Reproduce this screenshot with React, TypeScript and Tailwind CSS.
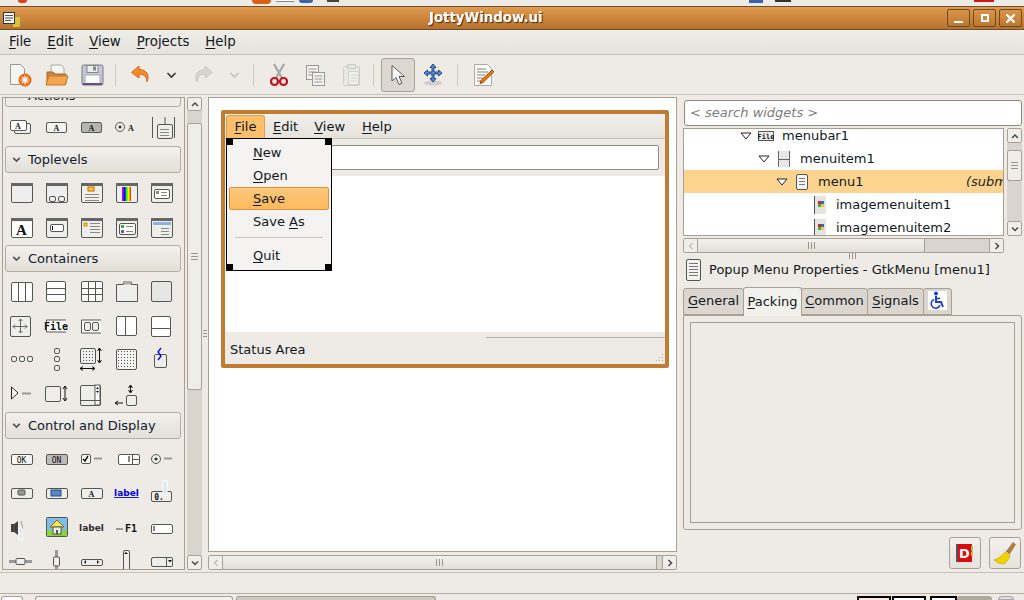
import type { ReactNode } from "react";

const ink = "#555753";

// text with an underlined mnemonic letter
function M({ k, rest, pre }: { k: string; rest: string; pre?: string }) {
  return (
    <span>
      {pre}
      <span className="underline underline-offset-2 decoration-1">{k}</span>
      {rest}
    </span>
  );
}

function Box(p: { x: number; y: number; w: number; h: number; fill?: string; r?: number; s?: string }) {
  return <rect x={p.x + 0.5} y={p.y + 0.5} width={p.w} height={p.h} rx={p.r ?? 1.5} fill={p.fill ?? "#eeeeec"} stroke={p.s ?? ink} />;
}

function Lines({ x, y, w, n, gap = 3, c = "#888a85" }: { x: number; y: number; w: number; n: number; gap?: number; c?: string }) {
  return (
    <>
      {Array.from({ length: n }).map((_, i) => (
        <line key={i} x1={x} x2={x + w} y1={y + i * gap + 0.5} y2={y + i * gap + 0.5} stroke={c} />
      ))}
    </>
  );
}

function Letter({ x, y, t = "A", size = 10, fill = "#111", family = "Liberation Serif", bold = true, underline }: { x: number; y: number; t?: string; size?: number; fill?: string; family?: string; bold?: boolean; underline?: boolean }) {
  return (
    <text x={x} y={y} textAnchor="middle" fontSize={size} fontWeight={bold ? 700 : 400} fill={fill} fontFamily={family} textDecoration={underline ? "underline" : undefined}>
      {t}
    </text>
  );
}

function Win({ children }: { children?: ReactNode }) {
  return (
    <>
      <Box x={7} y={7} w={21} h={19} />
      <rect x={7} y={7} width={22} height={3} fill="#666" />
      {children}
    </>
  );
}

const dots = (x: number, y: number, nx: number, ny: number) => {
  const out: ReactNode[] = [];
  for (let i = 0; i < nx; i++) for (let j = 0; j < ny; j++) out.push(<rect key={i + "-" + j} x={x + i * 3} y={y + j * 3} width={1} height={1} fill="#555" />);
  return out;
};

const arrowH = (x1: number, x2: number, y: number) => (
  <path d={`M${x1} ${y}H${x2}M${x1 + 3} ${y - 2}L${x1} ${y}L${x1 + 3} ${y + 2}M${x2 - 3} ${y - 2}L${x2} ${y}L${x2 - 3} ${y + 2}`} fill="none" stroke="#111" />
);
const arrowV = (x: number, y1: number, y2: number) => (
  <path d={`M${x} ${y1}V${y2}M${x - 2} ${y1 + 3}L${x} ${y1}L${x + 2} ${y1 + 3}M${x - 2} ${y2 - 3}L${x} ${y2}L${x + 2} ${y2 - 3}`} fill="none" stroke="#111" />
);

const actions: ReactNode[] = [
  <><Box x={10} y={13} w={16} h={10} /><Box x={6} y={10} w={16} h={10} fill="#fff" /><Letter x={14} y={19} size={8} /></>,
  <><Box x={7} y={12} w={20} h={10} fill="#f4f4f2" /><Letter x={17.5} y={21} size={8} /></>,
  <><Box x={7} y={12} w={20} h={10} fill="#b5b5b3" /><Letter x={17.5} y={21} size={8} /></>,
  <><circle cx={11} cy={17} r={4.5} fill="#eee" stroke={ink} /><circle cx={11} cy={17} r={1.5} fill="#333" /><Letter x={22} y={21} size={8} /></>,
  <><path d="M8.5 7V28M30.5 7V28" stroke={ink} /><Box x={13} y={14} w={15} h={14} /><Lines x={16} y={19} w={9} n={3} /><path d="M21 7V14" stroke={ink} /></>,
];

const toplevels: ReactNode[] = [
  <Win />,
  <Win><Box x={10} y={20} w={6} h={5} /><Box x={19} y={20} w={6} h={5} /></Win>,
  <Win><rect x={14} y={11} width={6} height={4} fill="#fc3" stroke="#c60" /><Lines x={11} y={18} w={14} n={3} /></Win>,
  <Win><rect x={13} y={11} width={9} height={14} fill="url(#rainbow)" /></Win>,
  <Win><Box x={10} y={13} w={15} h={9} fill="#fff" /><rect x={12} y={15} width={3} height={3} fill="#888" /><Lines x={17} y={16} w={6} n={2} /></Win>,
  <Win><rect x={8} y={11} width={20} height={15} fill="#fff" /><Letter x={17.5} y={24} size={15} /></Win>,
  <Win><Box x={11} y={13} w={13} h={7} fill="#fff" /><path d="M13.5 15v4" stroke="#111" /></Win>,
  <Win><rect x={10} y={12} width={3} height={3} fill="#fc3" stroke="#b90" /><Lines x={16} y={12} w={10} n={4} /></Win>,
  <Win><Box x={10} y={12} w={16} h={11} fill="#fff" /><rect x={12} y={14} width={3} height={3} fill="#4a4" /><rect x={12} y={19} width={3} height={3} fill="#75a" /><Lines x={17} y={15} w={7} n={2} gap={5} /></Win>,
  <Win><rect x={9} y={11} width={18} height={3} fill="#8fb0dc" /><Lines x={17} y={17} w={8} n={3} /></Win>,
];

const containers: ReactNode[] = [
  <><Box x={7} y={8} w={21} h={19} fill="#fff" /><path d="M14.5 8V27M21.5 8V27" stroke={ink} /></>,
  <><Box x={7} y={7} w={19} h={20} fill="#fff" /><path d="M7 14.5H26M7 20.5H26" stroke={ink} /></>,
  <><Box x={7} y={7} w={21} h={20} fill="#fff" /><path d="M14.5 7V27M21.5 7V27M7 14.5H28M7 20.5H28" stroke={ink} /></>,
  <><path d="M7.5 10.500H14.500V8H22.500V10.500H28.500V27.500H7.500Z" fill="#eeeeec" stroke={ink} /><rect x={14.5} y={7.5} width={8} height={3} rx={1} fill="#aaa" /></>,
  <><Box x={7} y={7} w={20} h={20} fill="#e6e6e4" /></>,
  <><Box x={6} y={7} w={20} h={20} /><path d="M16.5 10V24M9 17.5H23" stroke="#666" /><path d="M14.5 12l2-2 2 2M14.5 22l2 2 2-2M11 15.5l-2 2 2 2M21 15.5l2 2-2 2" fill="none" stroke="#666" /></>,
  <><path d="M27 11H7.5V23H27" fill="#fff" stroke={ink} /><Letter x={17} y={21} t="File" size={10} family="DejaVu Sans Mono" /></>,
  <><path d="M27 11H7.5V24H27" fill="#fff" stroke={ink} /><Box x={10} y={13} w={6} h={8} /><Box x={18} y={13} w={6} h={8} /></>,
  <><Box x={7} y={7} w={20} h={19} fill="#fff" /><path d="M16.5 7V26" stroke={ink} /></>,
  <><Box x={7} y={7} w={19} h={20} fill="#fff" /><path d="M7 19.5H26" stroke={ink} /></>,
  <><Box x={7} y={13} w={5} h={5} /><Box x={15} y={13} w={5} h={5} /><Box x={23} y={13} w={5} h={5} /></>,
  <><Box x={15} y={5} w={5} h={5} /><Box x={15} y={13} w={5} h={5} /><Box x={15} y={22} w={5} h={5} /></>,
  <><Box x={6} y={5} w={15} h={15} />{dots(9, 8, 4, 4)}{arrowV(25.5, 5, 20)}{arrowH(6, 21, 25.5)}</>,
  <><Box x={7} y={6} w={20} h={20} fill="#f4f4f2" />{dots(9, 8, 6, 6)}</>,
  <><Box x={10} y={11} w={12} h={13} /><path d="M17 5l-3 4 3 4-3 4" fill="none" stroke="#00f" strokeWidth={1.3} /></>,
  <><path d="M7.5 9V21L14 15Z" fill="#fff" stroke="#222" /><path d="M18 15.5H27" stroke="#999" strokeWidth={2} /></>,
  <><Box x={6} y={8} w={15} h={15} />{arrowV(26, 8, 23)}</>,
  <><Box x={6} y={7} w={20} h={20} /><rect x={21} y={7} width={5} height={20} fill="#fff" stroke={ink} /><path d="M22 11h3l-1.5-2zM22 13h3l-1.5 2z" fill="#111" /><path d="M6 22.5H26" stroke={ink} /></>,
  <><path d="M14 25H6M9 23l-3 2 3 2" fill="none" stroke="#111" /><Box x={17} y={17} w={10} h={10} />{arrowV(21.5, 7, 15)}</>,
];

const controls: ReactNode[] = [
  <><Box x={7} y={12} w={21} h={10} fill="#f6f6f4" /><Letter x={17.5} y={21} t="OK" size={8} family="DejaVu Sans Mono" bold={false} /></>,
  <><Box x={7} y={12} w={21} h={10} fill="#bbb" /><Letter x={17.5} y={21} t="ON" size={8} family="DejaVu Sans Mono" bold={false} /></>,
  <><Box x={7} y={12} w={9} h={9} fill="#fff" /><path d="M9 17l2 2 3-5" fill="none" stroke="#111" strokeWidth={1.5} /><path d="M20 16.5h8" stroke="#999" strokeWidth={2} /></>,
  <><Box x={9} y={12} w={21} h={10} fill="#fff" /><path d="M20 14v6" stroke="#111" /><path d="M23.5 12v11M23.5 17.5H30" stroke={ink} /></>,
  <><circle cx={12} cy={17} r={4.5} fill="#eee" stroke={ink} /><circle cx={12} cy={17} r={1.5} fill="#333" /><path d="M20 16.5h8" stroke="#999" strokeWidth={2} /></>,
  <><Box x={7} y={12} w={21} h={10} /><rect x={14} y={14} width={7} height={5} rx={1} fill="#999" stroke={ink} /></>,
  <><Box x={7} y={12} w={21} h={10} /><rect x={12} y={14} width={10} height={6} fill="#5b87c5" stroke="#204a87" /></>,
  <><Box x={7} y={12} w={21} h={10} /><Letter x={17.5} y={21} size={8} /></>,
  <Letter x={17.5} y={20} t="label" size={9} fill="#0000ee" family="DejaVu Sans" underline />,
  <><Box x={7} y={15} w={20} h={10} /><Letter x={15} y={24} t="0." size={8} family="DejaVu Sans Mono" /><rect x={19} y={5} width={4} height={14} fill="#dce6f4" stroke="#fff" /></>,
  <><path d="M7 13h3l4-3v14l-4-3H7z" fill="#444" /><path d="M17 10q3 6 0 12" fill="none" stroke="#999" /><rect x={15} y={17} width={3} height={12} fill="#dce6f4" stroke="#fff" /></>,
  <><rect x={7.5} y={6.5} width={21} height={19} rx={1} fill="#7ebdf0" stroke={ink} /><rect x={8} y={19} width={20} height={6} fill="#8ad33d" /><path d="M11 16l7-7 7 7z" fill="#fce94f" stroke="#8a6a00" /><rect x={14} y={16} width={8} height={7} fill="#eee" stroke="#555" /><rect x={17} y={19} width={2} height={4} fill="#555" /></>,
  <Letter x={17.5} y={20} t="label" size={9} fill="#2e2e2e" family="DejaVu Sans" />,
  <><path d="M7 18h7" stroke="#999" strokeWidth={2} /><Letter x={22} y={21} t="F1" size={10} family="DejaVu Sans Mono" /></>,
  <><Box x={7} y={13} w={21} h={9} fill="#fff" /><path d="M10 15v5" stroke="#111" /></>,
  <><path d="M5 16.5h23" stroke="#999" strokeWidth={3} /><rect x={12} y={13.5} width={9} height={6} rx={1} fill="#eee" stroke={ink} /></>,
  <><path d="M17.5 5v23" stroke="#999" strokeWidth={3} /><rect x={14.5} y={12} width={6} height={9} rx={1} fill="#eee" stroke={ink} /></>,
  <><Box x={7} y={14} w={21} h={6} /><path d="M12 15v4l-2-2zM23 15v4l2-2z" fill="#111" /></>,
  <><Box x={14} y={5} w={6} h={24} /><path d="M15 9h4l-2-2zM15 25h4l-2 2z" fill="#111" /></>,
  <><Box x={7} y={12} w={21} h={9} /><path d="M22.5 12v9" stroke={ink} /><path d="M24 15h4l-2 2.5z" fill="#111" /></>,
];

function Tool({ children }: { children: ReactNode }) {
  return (
    <svg width={35} height={34} viewBox="0 0 35 34" className="block">
      {children}
    </svg>
  );
}

function Grid({ items, rowH, pad }: { items: ReactNode[]; rowH: string; pad: string }) {
  return (
    <div className={`grid grid-cols-[repeat(5,35px)] pl-[1px] ${rowH} ${pad}`}>
      {items.map((it, i) => (
        <div key={i} className="h-[34px]">
          <Tool>{it}</Tool>
        </div>
      ))}
    </div>
  );
}

function Chevron({ dir, c = "#2e3436", size = 10 }: { dir: "up" | "down" | "left" | "right"; c?: string; size?: number }) {
  const d = { up: "M2 7l3-3 3 3", down: "M2 3.5l3 3 3-3", left: "M6.5 2l-3 3 3 3", right: "M3.5 2l3 3-3 3" }[dir];
  return (
    <svg width={size} height={size} viewBox="0 0 10 10" className="block">
      <path d={d} fill="none" stroke={c} strokeWidth={1.5} />
    </svg>
  );
}

function Expander({ label }: { label: string }) {
  return (
    <div className="w-[176px] h-[27px] ml-[2px] flex items-center rounded-[3px] border border-[#b3aca0] bg-gradient-to-b from-[#f3f1ee] to-[#e3dfd9] pl-[5px] gap-[6px] shrink-0">
      <Chevron dir="down" size={11} c="#555" />
      <span className="text-[13px] leading-none text-[#10202e]">{label}</span>
    </div>
  );
}

function GripV() {
  return (
    <div className="flex flex-col gap-[2px] w-[7px]">
      <div className="h-px bg-[#9a948a]" />
      <div className="h-px bg-[#9a948a]" />
      <div className="h-px bg-[#9a948a]" />
    </div>
  );
}

function GripH() {
  return (
    <div className="flex gap-[2px] h-[7px]">
      <div className="w-px bg-[#9a948a]" />
      <div className="w-px bg-[#9a948a]" />
      <div className="w-px bg-[#9a948a]" />
    </div>
  );
}

function ArrowBtn({ dir, dim, className }: { dir: "up" | "down" | "left" | "right"; dim?: boolean; className?: string }) {
  return (
    <div className={`flex items-center justify-center rounded-[2px] border border-[#a8a196] bg-[#f0eeea] shrink-0 ${className ?? ""}`}>
      <Chevron dir={dir} c={dim ? "#bbb7b0" : "#4a4a48"} />
    </div>
  );
}

function HScroll({ thumb, dim }: { thumb: string; dim?: boolean }) {
  return (
    <div className="h-[15px] flex rounded-[2px] border border-[#a8a196] bg-[#d9d5ce] overflow-hidden">
      <div className="w-[14px] flex items-center justify-center bg-[#f0eeea] border-r border-[#a8a196]">
        <Chevron dir="left" c={dim ? "#c4c0b9" : "#4a4a48"} />
      </div>
      <div className={`${thumb} flex items-center justify-center bg-gradient-to-b from-[#f3f1ee] to-[#e3dfd9] border-r border-[#a8a196]`}>
        <GripH />
      </div>
      <div className="flex-1" />
      <div className="w-[14px] flex items-center justify-center bg-[#f0eeea] border-l border-[#a8a196]">
        <Chevron dir="right" c="#4a4a48" />
      </div>
    </div>
  );
}

function MenuIcon({ w = 15, h = 22 }: { w?: number; h?: number }) {
  const rows: number[] = [];
  for (let y = 4.5; y < h - 3; y += 3) rows.push(y);
  return (
    <svg width={w} height={h} viewBox={`0 0 ${w} ${h}`} className="block shrink-0">
      <rect x={0.5} y={0.5} width={w - 1} height={h - 1} rx={1.5} fill="#f4f4f2" stroke="#555" />
      {rows.map((y) => (
        <path key={y} d={`M3 ${y}h${w - 6}`} stroke="#777" />
      ))}
    </svg>
  );
}

function TreeRow({ indent, arrow, icon, label, hint, selected }: { indent: number; arrow?: boolean; icon: ReactNode; label: string; hint?: string; selected?: boolean }) {
  return (
    <div className={`h-[23px] flex items-center shrink-0 whitespace-nowrap ${selected ? "bg-[#fdd48f]" : ""}`} style={{ paddingLeft: indent }}>
      {arrow ? (
        <svg width={12} height={8} viewBox="0 0 12 8" className="shrink-0 mr-[5px]">
          <path d="M1 1h10L6 7z" fill="#fff" stroke="#222" />
        </svg>
      ) : (
        <span className="w-[17px] shrink-0" />
      )}
      <span className="w-[18px] mr-[7px] flex justify-center shrink-0">{icon}</span>
      <span className="text-[13px] text-[#0f1a24]">{label}</span>
      {hint && <span className="ml-auto text-[13px] italic w-[37px] overflow-hidden shrink-0 text-[#222]">{hint}</span>}
    </div>
  );
}

function ImgItem() {
  return (
    <svg width={12} height={18} viewBox="0 0 12 18" className="block">
      <rect width={12} height={18} fill="#e4e4e2" />
      <path d="M0.5 0V18" stroke="#555" />
      <rect x={4} y={5} width={3} height={3} fill="#d22" />
      <rect x={7} y={5} width={3} height={3} fill="#36c" />
      <rect x={4} y={8} width={3} height={3} fill="#4a4" />
      <rect x={7} y={8} width={3} height={3} fill="#ec3" />
    </svg>
  );
}

function Tab({ active, w, children }: { active?: boolean; w: string; children: ReactNode }) {
  return (
    <div className={`${w} flex items-center justify-center pb-[2px] text-[13px] leading-none border border-[#a8a196] rounded-t-[3px] -mr-px ${active ? "h-[29px] bg-[#f3f1ee] border-b-0 relative z-10 -mb-px" : "h-[27px] bg-[#dbd6cf] "}`}>
      {children}
    </div>
  );
}

function Sep() {
  return <div className="w-px h-[22px] bg-[#cfcac2]" />;
}

function Tb({ w, children }: { w: number; children: ReactNode }) {
  return (
    <svg width={w} height={24} viewBox={`0 0 ${w} 24`} className="block shrink-0">
      {children}
    </svg>
  );
}

function ToolChevron({ c }: { c: string }) {
  return (
    <svg width={11} height={8} viewBox="0 0 11 8" className="block shrink-0">
      <path d="M1.5 2l4 4 4-4" fill="none" stroke={c} strokeWidth={1.6} />
    </svg>
  );
}

function Toolbar() {
  return (
    <div className="h-[40px] flex items-center border-b border-[#c8c3b9] shrink-0 relative">
      <div className="pl-[8px]"><Tb w={24}>
        <path d="M2.5 1.5h10l4 4v16h-14z" fill="#f4f4f2" stroke="#999" />
        <circle cx={17} cy={17} r={6.5} fill="#ec6a13" />
        <path d="M17 12.5v9M12.5 17h9M14 14l6 6M20 14l-6 6" stroke="#fff" strokeWidth={1.2} />
      </Tb></div>
      <div className="pl-[13px]"><Tb w={24}>
        <path d="M6 2h10l3 3v11H6z" fill="#f4f4f2" stroke="#aaa" />
        <path d="M2 9h6l2 2h11v10H2z" fill="#c9853f" stroke="#a86a2a" />
        <path d="M4 13h19l-3 9H1z" fill="#f5a54e" stroke="#c47a2c" />
      </Tb></div>
      <div className="pl-[12px]"><Tb w={23}>
        <rect x={1} y={2} width={21} height={20} rx={1.5} fill="#c5c7d6" stroke="#777a90" />
        <rect x={6} y={2.5} width={11} height={7} fill="#eeeef0" stroke="#888" />
        <rect x={12} y={3.5} width={3} height={4} fill="#888" />
        <rect x={4} y={12} width={15} height={10} fill="#fafafa" stroke="#aaa" />
        <rect x={2} y={20} width={19} height={2} fill="#6f4c86" />
      </Tb></div>
      <div className="pl-[11px]"><Sep /></div>
      <div className="pl-[14px]"><Tb w={21}>
        <path d="M9 3L1.5 9.5 9 15v-3.8c5 0 7.5 2 8 7.5 3-7-.5-12-8-12.2z" fill="#f58a2c" stroke="#d8641a" strokeLinejoin="round" />
      </Tb></div>
      <div className="pl-[15px]"><ToolChevron c="#333" /></div>
      <div className="pl-[16px]"><Tb w={21}>
        <path d="M12 3l7.5 6.5L12 15v-3.8c-5 0-7.5 2-8 7.5-3-7 .5-12 8-12.2z" fill="#d5d4cf" stroke="#cac9c4" strokeLinejoin="round" />
      </Tb></div>
      <div className="pl-[15px]"><ToolChevron c="#c4c1ba" /></div>
      <div className="pl-[13px]"><Sep /></div>
      <div className="pl-[16px]"><Tb w={18}>
        <path d="M4 1l8 14M14 1L6 15" stroke="#aaa" strokeWidth={2.4} />
        <circle cx={4.5} cy={18.5} r={3.5} fill="none" stroke="#c4121b" strokeWidth={2.2} />
        <circle cx={13.5} cy={18.5} r={3.5} fill="none" stroke="#c4121b" strokeWidth={2.2} />
      </Tb></div>
      <div className="pl-[17px]"><Tb w={20}>
        <rect x={1.5} y={2.5} width={12} height={14} fill="#f2f2f0" stroke="#999" />
        <path d="M3.5 6h8M3.5 9h8M3.5 12h8" stroke="#999" />
        <rect x={7.5} y={9.5} width={12} height={13} fill="#f2f2f0" stroke="#999" />
        <path d="M9.5 13h8M9.5 16h8M9.5 19h8" stroke="#999" />
      </Tb></div>
      <div className="pl-[17px]"><Tb w={19}>
        <rect x={1.5} y={3.5} width={16} height={19} rx={1} fill="#e9e8e4" stroke="#cfcdc7" />
        <rect x={5.5} y={1.5} width={8} height={4} fill="#e4e3df" stroke="#cfcdc7" />
        <rect x={6.5} y={8.5} width={10} height={13} fill="#f2f1ee" stroke="#d4d2cc" />
        <path d="M8 12h7M8 15h7M8 18h7" stroke="#d4d2cc" />
      </Tb></div>
      <div className="pl-[12px]"><Sep /></div>
      <div className="ml-[7px] w-[34px] h-[34px] rounded-[3px] border border-[#a8a196] bg-[#dcd7d1] flex items-center justify-center">
        <svg width={16} height={22} viewBox="0 0 16 22">
          <path d="M2 1.5V17l4-3.5 3 7 3-1.3-3-6.7h5.5z" fill="#fff" stroke="#555" strokeLinejoin="round" />
        </svg>
      </div>
      <div className="pl-[8px]"><Tb w={20}>
        <ellipse cx={10} cy={20} rx={9} ry={2.5} fill="#bbb" opacity={0.6} />
        <path d="M10 1l3 3.5h-2V9h4.5V7l3.5 3-3.5 3v-2H11v4.5h2L10 19l-3-3.5h2V11H4.500v2L1 10l3.500-3v2H9V4.500H7z" fill="#5c8ccc" stroke="#204a87" />
      </Tb></div>
      <div className="pl-[14px]"><Sep /></div>
      <div className="pl-[15px]"><Tb w={21}>
        <path d="M1.500 1.500h13l4 4v17h-17z" fill="#f8f8f6" stroke="#aaa" />
        <path d="M4 6h9M4 9h11M4 12h8M4 15h6M4 18h5" stroke="#888" />
        <path d="M19 7l1.800 1.800L10 19.500l-3 1 1-3z" fill="#f57900" stroke="#8f4a05" />
      </Tb></div>
    </div>
  );
}

function Palette() {
  return (
    <div className="w-[183px] ml-[2px] h-[473px] border border-[#a89f92] overflow-hidden shrink-0 flex flex-col">
      <div className="w-[176px] h-[27px] ml-[2px] -mt-[18px] pt-[4px] shrink-0 flex items-center rounded-[3px] border border-[#b3aca0] pl-[22px] text-[13px] leading-none">
        Actions
      </div>
      <Grid items={actions} rowH="" pad="pt-[3px] pb-[2px]" />
      <Expander label="Toplevels" />
      <Grid items={toplevels} rowH="gap-y-px" pad="pt-[3px]" />
      <Expander label="Containers" />
      <Grid items={containers} rowH="gap-y-[0.5px]" pad="pt-[2px]" />
      <Expander label="Control and Display" />
      <Grid items={controls} rowH="gap-y-[0.5px]" pad="pt-[3px]" />
    </div>
  );
}

function Handle({ className }: { className: string }) {
  return <div className={`absolute w-[7px] h-[7px] bg-black ${className}`} />;
}

function Preview() {
  return (
    <div className="mt-[12px] ml-[12px] w-[448px] h-[258px] border-[4px] border-[#c07c33] rounded-[2px] flex flex-col relative bg-[#eeebe6]">
      <div className="h-[25px] flex items-stretch border-b border-[#c8c3b9] bg-gradient-to-b from-[#f2f0ec] to-[#e6e2dc] pl-[1px] pt-[1px] text-[13px] shrink-0">
        <div className="w-[39px] rounded-t-[3px] bg-[#fdbf6b] border border-b-0 border-[#e0a050] flex items-center justify-center"><M k="F" rest="ile" /></div>
        <div className="ml-[8px] flex items-center"><M k="E" rest="dit" /></div>
        <div className="ml-[16px] flex items-center"><M k="V" rest="iew" /></div>
        <div className="ml-[17px] flex items-center"><M k="H" rest="elp" /></div>
      </div>
      <div className="h-[37px] pt-[6px] px-[6px] shrink-0">
        <div className="ml-[2px] h-[25px] w-[426px] bg-white border border-[#8f8a82] rounded-[2px]" />
      </div>
      <div className="h-[156px] bg-white shrink-0" />
      <div className="flex-1 relative flex items-center pl-[5px] pt-[4px] text-[13px] text-[#101820]">
        Status Area
        <div className="absolute top-[5px] left-[261px] right-0 h-[2px] border-t border-[#b8b2a8] border-b-white" />
        <svg width={10} height={10} className="absolute right-[1px] bottom-[1px]">
          <path d="M8 1h1v1H8zM5 4h1v1H5zM8 4h1v1H8zM2 7h1v1H2zM5 7h1v1H5zM8 7h1v1H8z" fill="#b3aea4" />
        </svg>
      </div>

      {/* open File menu with its selection handles */}
      <div className="absolute left-[1px] top-[24px] w-[106px] h-[133px] border border-black bg-[#f5f3f1] text-[13px] text-[#101820] z-10 pt-[2px]">
        <Handle className="-left-px -top-px" />
        <Handle className="-right-px -top-px" />
        <Handle className="-left-px -bottom-px" />
        <Handle className="-right-px -bottom-px" />
        <div className="h-[23px] pl-[26px] flex items-center"><M k="N" rest="ew" /></div>
        <div className="h-[23px] pl-[26px] flex items-center"><M k="O" rest="pen" /></div>
        <div className="h-[23px] ml-[2px] mr-[2px] pl-[23px] flex items-center rounded-[2px] border border-[#d8953f] bg-gradient-to-b from-[#fdc87c] to-[#fcb95c]"><M k="S" rest="ave" /></div>
        <div className="h-[23px] pl-[26px] flex items-center"><M k="A" pre="Save " rest="s" /></div>
        <div className="h-[9px] flex items-center px-[8px]"><div className="h-px w-full bg-[#cdc8bf]" /></div>
        <div className="h-[28px] pl-[26px] flex items-center"><M k="Q" rest="uit" /></div>
      </div>
    </div>
  );
}

function RightPanel() {
  return (
    <div className="w-[340px] ml-[6px] shrink-0 flex flex-col pt-[3px]">
      <div className="h-[26px] mx-px border border-[#8f8a82] rounded-[3px] bg-white flex items-center pl-[5px] pb-[1px] text-[13px] italic text-[#7c7c7c] shrink-0">
        &lt; search widgets &gt;
      </div>
      <div className="flex h-[108px] mt-[2px] gap-[3px] shrink-0">
        <div className="w-[321px] border border-[#a89f92] bg-white overflow-hidden flex flex-col">
          <div className="-mt-[5px] flex flex-col">
            <TreeRow indent={56} arrow label="menubar1" icon={
              <svg width={16} height={10} viewBox="0 0 16 10"><rect x={0.5} y={0.5} width={15} height={9} fill="#eee" stroke="#555" /><text x={8} y={8} textAnchor="middle" fontSize={7} fontWeight={700} fontFamily="DejaVu Sans Mono" fill="#111">File</text></svg>
            } />
            <TreeRow indent={74} arrow label="menuitem1" icon={
              <svg width={12} height={16} viewBox="0 0 12 16"><rect width={12} height={16} fill="#e8e8e6" /><path d="M0.5 0V16M11.500 0V16M0 8.500H12" stroke="#666" /></svg>
            } />
            <TreeRow indent={92} arrow selected label="menu1" hint="(subm" icon={<MenuIcon w={12} h={16} />} />
            <TreeRow indent={110} label="imagemenuitem1" icon={<ImgItem />} />
            <TreeRow indent={110} label="imagemenuitem2" icon={<ImgItem />} />
          </div>
        </div>
        <div className="w-[15px] flex flex-col">
          <ArrowBtn dir="up" className="h-[15px]" />
          <div className="flex-1 bg-[#d9d5ce] flex flex-col pt-[7px]">
            <div className="h-[31px] border border-[#a8a196] rounded-[2px] bg-[#efedea] flex items-center justify-center"><GripV /></div>
          </div>
          <ArrowBtn dir="down" className="h-[15px]" />
        </div>
      </div>
      <div className="mt-[2px] w-[321px]">
        <HScroll thumb="w-[227px]" dim />
      </div>
      <div className="h-[6px] flex justify-center items-center w-[340px] shrink-0 pr-[1px] overflow-hidden"><GripH /></div>
      <div className="h-[22px] flex items-center pl-[3px] gap-[8px] text-[13px] text-[#101820] whitespace-nowrap shrink-0">
        <MenuIcon />
        Popup Menu Properties - GtkMenu [menu1]
      </div>
      <div className="mt-[7px] flex items-end h-[27px] shrink-0">
        <Tab w="w-[61px]"><M k="G" rest="eneral" /></Tab>
        <Tab w="w-[59px]" active><M k="P" rest="acking" /></Tab>
        <Tab w="w-[67px]"><M k="C" rest="ommon" /></Tab>
        <Tab w="w-[57px]"><M k="S" rest="ignals" /></Tab>
        <Tab w="w-[29px]">
          <svg width={19} height={19} viewBox="0 0 19 19" className="block">
            <rect width={19} height={19} fill="#fff" />
            <circle cx={8} cy={2.5} r={2} fill="#1c3fd0" />
            <path d="M8 5v6h5l2 5" fill="none" stroke="#1c3fd0" strokeWidth={2} />
            <path d="M8 7.500h4" stroke="#1c3fd0" strokeWidth={1.6} />
            <path d="M6 8.500a4.500 4.500 0 1 0 6 5.500" fill="none" stroke="#1c3fd0" strokeWidth={1.6} />
          </svg>
        </Tab>
      </div>
      <div className="h-[215px] w-[339px] border border-[#a89f92] rounded-b-[3px] rounded-tr-[3px] p-[6px] shrink-0">
        <div className="h-full border border-[#a89f92]" />
      </div>
      <div className="mt-[7px] flex justify-end gap-[8px] pr-[2px]">
        <button className="w-[32px] h-[32px] rounded-[3px] border border-[#a8a196] bg-gradient-to-b from-[#f3f1ee] to-[#e6e2dc] flex items-center justify-center">
          <svg width={18} height={20} viewBox="0 0 18 20" className="block">
            <rect x={0} y={1} width={3} height={18} fill="#555" />
            <rect x={2} y={1} width={14} height={18} fill="#dd0b0b" />
            <rect x={15} y={3} width={2} height={5} fill="#8ad33d" />
            <rect x={15} y={9} width={2} height={4} fill="#fcaf3e" />
            <text x={8.500} y={15} textAnchor="middle" fontSize={13} fontWeight={700} fontFamily="DejaVu Sans" fill="#fff">D</text>
          </svg>
        </button>
        <button className="w-[32px] h-[32px] rounded-[3px] border border-[#a8a196] bg-gradient-to-b from-[#f3f1ee] to-[#e6e2dc] flex items-center justify-center">
          <svg width={24} height={24} viewBox="0 0 24 24" className="block">
            <path d="M20 1.500l2.500 2-5 8-3-2.500z" fill="#b5803a" stroke="#8f5902" strokeWidth={0.5} />
            <path d="M14 9l3.500 3-.5 1-4-3z" fill="#75507b" />
            <path d="M12.500 10.500l4.500 3.500c-1 4-3 7-6 9-3 0-7-1-10-4 4-1 8-4 11.500-8.500z" fill="#edd400" stroke="#c4a000" strokeWidth={0.6} />
          </svg>
        </button>
      </div>
    </div>
  );
}

export default function App() {
  return (
    <div className="w-[1024px] h-[600px] overflow-hidden flex flex-col bg-[#eeebe6] font-['DejaVu_Sans',sans-serif] text-[#101820] select-none">
      {/* desktop panel, mostly cut off */}
      <div className="h-[6px] bg-[#eeebe6] flex shrink-0 overflow-hidden relative">
        <div className="w-[9px] h-[3px] ml-[18px] rounded-b-full bg-[#d9421a]" />
        <div className="ml-[225px] w-[19px] h-[4px] rounded-b-full bg-[#d9601a]" />
        <div className="ml-[5px] w-[18px] h-[2px] bg-white border-b border-[#888]" />
        <div className="ml-[5px] w-[14px] h-[3px] rounded-b-full bg-[#3b63a8]" />
        <div className="ml-[14px] w-[12px] h-[2px] bg-[#444]" />
        <div className="ml-[410px] w-[14px] h-[3px] bg-[#3b63a8]" />
        <div className="ml-[12px] w-[16px] h-[2px] bg-[#333]" />
        <div className="ml-[183px] w-[20px] h-[2px] bg-[#d01818]" />
      </div>

      {/* window title bar */}
      <div className="h-[24px] border-y border-[#6a5232] bg-gradient-to-b from-[#e19a4d] to-[#b6722e] relative flex items-center shrink-0">
        <svg width={17} height={15} viewBox="0 0 17 15" className="ml-[3px] mt-[3px] block">
          <rect x={10} y={5} width={8} height={10} fill="#d9c23c" />
          <rect x={0.5} y={0.5} width={11} height={11} fill="#f4f4f2" stroke="#333" />
          <path d="M2 3.500h8M2 6h8M2 8.500h6" stroke="#555" />
        </svg>
        <span className="absolute left-[429px] text-[13.33px] font-bold text-white [text-shadow:1px_1px_1px_#4a2c08]">JottyWindow.ui</span>
        <div className="ml-auto flex gap-[3px] pr-[2px]">
          <div className="w-[23px] h-[18px] border border-[#6a4a22] rounded-[2px] flex items-end justify-center pb-[3px]"><div className="w-[9px] h-[2px] bg-white" /></div>
          <div className="w-[23px] h-[18px] border border-[#6a4a22] rounded-[2px] flex items-center justify-center"><div className="w-[8px] h-[8px] border-2 border-white" /></div>
          <div className="w-[23px] h-[18px] border border-[#6a4a22] rounded-[2px] flex items-center justify-center">
            <svg width={11} height={11} viewBox="0 0 11 11"><path d="M1.500 1.500l8 8M9.500 1.500l-8 8" stroke="#fff" strokeWidth={2.4} /></svg>
          </div>
        </div>
      </div>

      {/* menu bar */}
      <div className="h-[25px] flex items-center border-b border-[#c8c3b9] bg-gradient-to-b from-[#f0eeea] to-[#e6e2dc] text-[13.33px] shrink-0 pl-[9px] gap-[16px]">
        <M k="F" rest="ile" />
        <M k="E" rest="dit" />
        <M k="V" rest="iew" />
        <M k="P" rest="rojects" />
        <M k="H" rest="elp" />
      </div>

      <Toolbar />

      <div className="h-[478px] flex border-b border-[#c8c3b9] shrink-0 pt-[2px]">
        <Palette />
        <div className="w-[15px] ml-[2px] h-[473px] flex flex-col shrink-0">
          <ArrowBtn dir="up" className="h-[14px]" />
          <div className="flex-1 bg-[#d9d5ce] flex flex-col pt-[12px]">
            <div className="h-[267px] border border-[#a8a196] rounded-[2px] bg-[#efedea] flex items-center justify-center"><GripV /></div>
          </div>
          <ArrowBtn dir="down" className="h-[15px]" />
        </div>
        <div className="w-[6px] shrink-0 flex items-start pt-[233px] justify-center"><div className="flex flex-col gap-[2px]"><div className="h-px w-[4px] bg-[#9a948a]" /><div className="h-px w-[4px] bg-[#9a948a]" /><div className="h-px w-[4px] bg-[#9a948a]" /></div></div>
        <div className="w-[469px] shrink-0 flex flex-col">
          <div className="h-[455px] border border-[#a89f92] bg-white">
            <Preview />
          </div>
          <div className="mt-[3px]">
            <HScroll thumb="w-[434px]" dim />
          </div>
        </div>
        <RightPanel />
      </div>

      {/* empty status bar */}
      <div className="h-[21px] border-b border-[#b3ada2] shrink-0" />

      {/* task bar, cut off by the picture edge */}
      <div className="flex-1 relative flex items-end pl-[1px] overflow-hidden">
        <div className="h-[4px] w-[22px] border border-[#a89f92] border-b-0 rounded-t-[3px] bg-white" />
        <div className="ml-[12px] h-[4px] w-[198px] border border-[#a89f92] border-b-0 rounded-t-[3px] bg-[#f3f1ee]" />
        <div className="ml-[3px] h-[4px] w-[200px] border border-[#a89f92] border-b-0 rounded-t-[3px] bg-[#cfc9c0]" />
        <div className="ml-[421px] h-[4px] w-[34px] border-2 border-b-0 border-black bg-[#fbe9d3]" />
        <div className="ml-px h-[4px] w-[34px] border-2 border-b-0 border-black bg-white" />
        <div className="ml-[4px] h-[4px] w-[27px] border-2 border-b-0 border-black bg-white" />
        <div className="h-[4px] w-[35px] bg-[#b0a99d] rounded-t-[3px]" />
        <div className="ml-[6px] h-[4px] w-[16px] rounded-t-full border border-[#aaa] bg-[#ddd]" />
      </div>

      <svg width={0} height={0} className="absolute">
        <defs>
          <linearGradient id="rainbow" x1="0" x2="1" y1="0" y2="0">
            <stop offset="0" stopColor="#f0f" />
            <stop offset="0.3" stopColor="#00f" />
            <stop offset="0.5" stopColor="#0f0" />
            <stop offset="0.75" stopColor="#ff0" />
            <stop offset="1" stopColor="#f00" />
          </linearGradient>
        </defs>
      </svg>
    </div>
  );
}
